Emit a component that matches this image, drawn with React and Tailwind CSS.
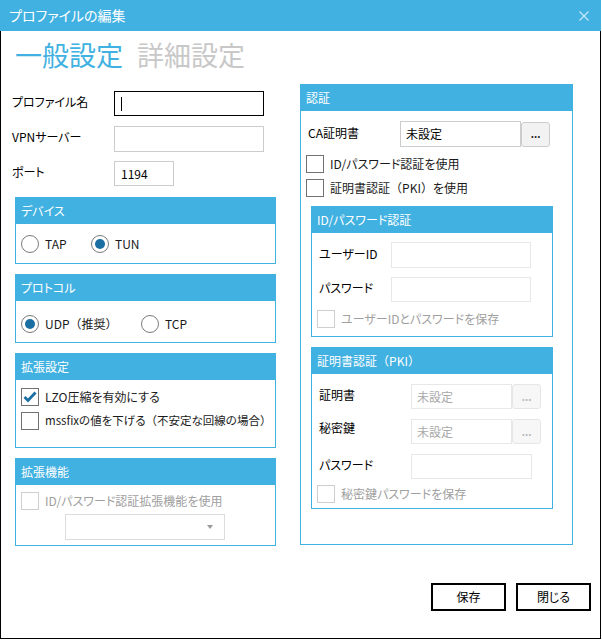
import React from 'react';

// full-width bracket, kept at full width while the rest of the text uses proportional kana
const W = ({ children }) => <span className="[font-feature-settings:normal]">{children}</span>;

function Group({ title, className = '', children }) {
  return (
    <div className={`border border-[#41b1e1] bg-white ${className}`}>
      <div className="h-[26px] bg-[#41b1e1] pl-[5px] text-[12px] leading-[26px] text-white">{title}</div>
      {children}
    </div>
  );
}

function Radio({ checked, label, className = '' }) {
  return (
    <div className={`flex items-center ${className}`}>
      <span className="flex h-[18px] w-[18px] items-center justify-center rounded-full border border-[#7a7a7a] bg-white">
        {checked && <span className="h-[10px] w-[10px] rounded-full bg-[#1b6fa3]" />}
      </span>
      <span className="ml-[6px] text-[12px] text-[#1a1a1a]">{label}</span>
    </div>
  );
}

function Check({ checked, label, disabled, className = '', textClass = 'text-[12px]' }) {
  return (
    <div className={`flex items-center ${className}`}>
      <span className={`flex h-[18px] w-[18px] shrink-0 items-center justify-center border bg-white ${disabled ? 'border-[#cfcfcf]' : 'border-[#707070]'}`}>
        {checked && (
          <svg width="14" height="12" viewBox="0 0 14 12">
            <path d="M1.5 6 L5 9.5 L12.5 1.5" fill="none" stroke="#1b6fa3" strokeWidth="2.8" />
          </svg>
        )}
      </span>
      <span className={`ml-[6px] whitespace-nowrap ${textClass} ${disabled ? 'text-[#a0a0a0]' : 'text-[#1a1a1a]'}`}>{label}</span>
    </div>
  );
}

function Dots({ disabled }) {
  return (
    <span className={`flex h-[25px] w-[29px] items-center justify-center rounded-[3px] border text-[10px] font-bold leading-none ${disabled ? 'border-[#e6e6e6] bg-[#f7f7f7] text-[#b5b5b5]' : 'border-[#cccccc] bg-[#f2f2f2] text-[#222]'}`}>
      ...
    </span>
  );
}

export default function App() {
  return (
    <div className="flex h-[639px] w-[601px] flex-col bg-white font-['Noto_Sans_CJK_JP','Noto_Sans',sans-serif] [font-feature-settings:'palt']">
      {/* title bar */}
      <div className="flex h-[31px] items-center justify-between bg-[#41b1e1] pl-[9px] pr-[12px]">
        <span className="text-[14px] text-white">プロファイルの編集</span>
        <svg width="10" height="10" viewBox="0 0 10 10">
          <path d="M0.5 0.5 L9.5 9.5 M9.5 0.5 L0.5 9.5" stroke="#c4e7f7" strokeWidth="1.3" />
        </svg>
      </div>

      <div className="flex flex-1 flex-col border-x border-b border-black">
        {/* tabs */}
        <div className="mt-[6px] flex h-[36px] gap-[14px] pl-[14px] text-[27px] leading-[36px]">
          <span className="text-[#41b1e1]">一般設定</span>
          <span className="text-[#c8c8c8]">詳細設定</span>
        </div>

        <div className="flex">
          {/* left column */}
          <div className="w-[288px] pl-[11px]">
            <div className="mt-[18px] flex h-[25px]">
              <span className="w-[102px] text-[12px] leading-[22px]">プロファイル名</span>
              <div className="flex h-[25px] w-[150px] items-center border border-black pl-[6px]">
                <span className="h-[14px] w-px bg-black" />
              </div>
            </div>
            <div className="mt-[10px] flex h-[26px]">
              <span className="w-[102px] text-[12px] leading-[22px]">VPNサーバー</span>
              <div className="h-[26px] w-[150px] border border-[#cccccc]" />
            </div>
            <div className="mt-[9px] flex h-[25px]">
              <span className="w-[102px] text-[12px] leading-[22px]">ポート</span>
              <div className="h-[25px] w-[60px] border border-[#cccccc] pl-[6px] text-[12px] leading-[23px]">1194</div>
            </div>

            <Group title="デバイス" className="ml-[3px] mt-[11px] h-[67px] w-[261px]">
              <div className="flex pl-[5px] pt-[11px]">
                <Radio label="TAP" className="w-[70px]" />
                <Radio label="TUN" checked />
              </div>
            </Group>

            <Group title="プロトコル" className="ml-[3px] mt-[10px] h-[69px] w-[261px]">
              <div className="flex pl-[5px] pt-[14px]">
                <Radio label={<>UDP<W>（</W>推奨<W>）</W></>} checked className="w-[120px]" />
                <Radio label="TCP" />
              </div>
            </Group>

            <Group title="拡張設定" className="ml-[3px] mt-[10px] h-[95px] w-[261px]">
              <div className="pl-[5px] pt-[8px]">
                <Check label="LZO圧縮を有効にする" checked />
                <Check
                  label={<>mssfixの値を下げる<W>（</W>不安定な回線の場合<W>）</W></>}
                  textClass="text-[11.5px]"
                  className="mt-[6px]"
                />
              </div>
            </Group>

            <Group title="拡張機能" className="ml-[3px] mt-[10px] h-[88px] w-[261px]">
              <div className="pl-[5px] pt-[7px]">
                <Check label="ID/パスワード認証拡張機能を使用" disabled />
                <div className="ml-[44px] mt-[4px] flex h-[26px] w-[160px] items-center justify-end border border-[#dcdcdc] pr-[11px]">
                  <svg width="6" height="4" viewBox="0 0 6 4">
                    <path d="M0 0 L6 0 L3 4 Z" fill="#9a9a9a" />
                  </svg>
                </div>
              </div>
            </Group>
          </div>

          {/* right column */}
          <Group title="認証" className="ml-[11px] mt-[11px] h-[461px] w-[273px]">
            <div className="mt-[10px] flex items-center pl-[7px]">
              <span className="-mt-[3px] w-[92px] text-[12px] leading-[20px]">CA証明書</span>
              <div className="h-[26px] w-[121px] border border-[#cccccc] pl-[5px] text-[12px] leading-[24px]">未設定</div>
              <Dots />
            </div>
            <Check label="ID/パスワード認証を使用" className="mt-[8px] pl-[5px]" />
            <Check label={<>証明書認証<W>（</W>PKI<W>）</W>を使用</>} className="mt-[6px] pl-[5px]" />

            <Group title="ID/パスワード認証" className="ml-[10px] mt-[9px] h-[131px] w-[242px]">
              <div className="mt-[9px] flex items-center pl-[7px]">
                <span className="-mt-[3px] w-[72px] text-[12px] leading-[20px]">ユーザーID</span>
                <div className="h-[26px] w-[140px] border border-[#e8e8e8]" />
              </div>
              <div className="mt-[9px] flex items-center pl-[7px]">
                <span className="-mt-[4px] w-[72px] text-[12px] leading-[20px]">パスワード</span>
                <div className="h-[25px] w-[140px] border border-[#e8e8e8]" />
              </div>
              <Check label="ユーザーIDとパスワードを保存" disabled className="mt-[8px] pl-[5px]" />
            </Group>

            <Group title={<>証明書認証<W>（</W>PKI<W>）</W></>} className="ml-[10px] mt-[10px] h-[162px] w-[242px]">
              <div className="mt-[10px] flex items-center pl-[7px]">
                <span className="-mt-[3px] w-[92px] text-[12px] leading-[20px]">証明書</span>
                <div className="h-[25px] w-[101px] border border-[#e8e8e8] pl-[5px] text-[12px] leading-[23px] text-[#a8a8a8]">未設定</div>
                <Dots disabled />
              </div>
              <div className="mt-[10px] flex items-center pl-[7px]">
                <span className="-mt-[7px] w-[92px] text-[12px] leading-[20px]">秘密鍵</span>
                <div className="h-[25px] w-[101px] border border-[#e8e8e8] pl-[5px] text-[12px] leading-[23px] text-[#a8a8a8]">未設定</div>
                <Dots disabled />
              </div>
              <div className="mt-[10px] flex items-center pl-[7px]">
                <span className="-mt-[3px] w-[92px] text-[12px] leading-[20px]">パスワード</span>
                <div className="h-[25px] w-[121px] border border-[#e8e8e8]" />
              </div>
              <Check label="秘密鍵パスワードを保存" disabled className="mt-[6px] pl-[5px]" />
            </Group>
          </Group>
        </div>

        {/* buttons */}
        <div className="mb-[27px] mt-auto flex justify-end gap-[10px] pr-[9px]">
          <button className="h-[28px] w-[75px] border-2 border-black bg-white text-[12px]">保存</button>
          <button className="h-[28px] w-[75px] border-2 border-black bg-white text-[12px]">閉じる</button>
        </div>
      </div>
    </div>
  );
}
